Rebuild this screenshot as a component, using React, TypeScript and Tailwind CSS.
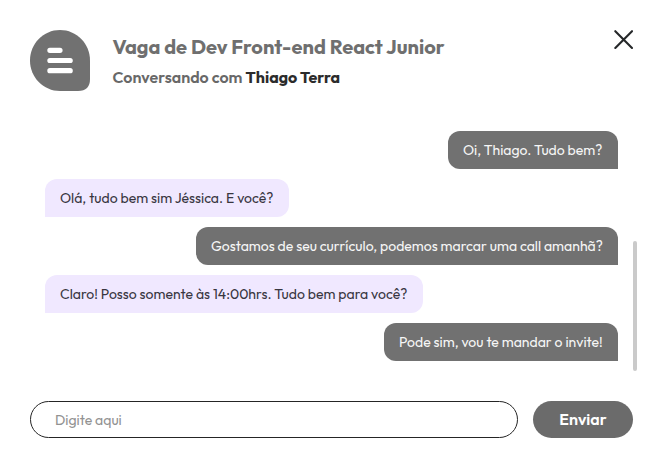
type Message = { text: string; mine: boolean; width: string };

const messages: Message[] = [
  { text: "Oi, Thiago. Tudo bem?", mine: true, width: "w-[170px]" },
  { text: "Olá, tudo bem sim Jéssica. E você?", mine: false, width: "w-[244px]" },
  { text: "Gostamos de seu currículo, podemos marcar uma call amanhã?", mine: true, width: "w-[422px]" },
  { text: "Claro! Posso somente às 14:00hrs. Tudo bem para você?", mine: false, width: "w-[378px]" },
  { text: "Pode sim, vou te mandar o invite!", mine: true, width: "w-[234px]" },
];

function Bubble({ text, mine, width }: Message) {
  const side = mine
    ? "self-end rounded-br-none bg-[#717171] text-[#f6f6f6]"
    : "self-start rounded-bl-none bg-[#f0e8ff] text-[#38363f]";
  return (
    <div className={`flex h-[38px] items-center whitespace-nowrap rounded-xl pl-[15px] text-[14px] ${side} ${width}`}>
      {text}
    </div>
  );
}

export default function App() {
  return (
    <main className="flex h-[468px] w-[663px] flex-col overflow-hidden bg-white px-[30px] pt-[30px] font-['Outfit','Lato',sans-serif]">
      <header className="flex h-[61px] items-start">
        <svg width="60" height="61" viewBox="0 0 60 61" className="shrink-0">
          <path d="M30 0C46.6 0 60 13.6 60 30.5V49Q60 61 48 61H30C13.4 61 0 47.4 0 30.5S13.4 0 30 0Z" fill="#717171" />
          <g stroke="#fff" strokeWidth="5.2" strokeLinecap="round">
            <path d="M19.9 20.3H30M19.9 30.5H40.2M19.9 40.7H40.2" />
          </g>
        </svg>
        <div className="ml-[22.5px] flex flex-col whitespace-nowrap">
          <h1 className="mt-[4px] h-[26px] self-start text-[20px] font-bold leading-[26px] text-[#6f6f6f]">Vaga de Dev Front-end React Junior</h1>
          <p className="mt-[7px] text-[16px] font-semibold leading-[20px] text-[#686868]">
            Conversando com <strong className="font-bold text-[#2b2b2b]">Thiago Terra</strong>
          </p>
        </div>
        <button aria-label="Fechar" className="ml-auto">
          <svg width="20" height="20" viewBox="0 0 20 20" stroke="#252729" strokeWidth="2.1" strokeLinecap="round">
            <path d="M2.3 1.2 19 17.9M19 1.2 2.3 17.9" />
          </svg>
        </button>
      </header>

      <section className="mt-[40px] -mr-[4px] flex h-[240px] justify-between pl-[15px]">
        <div className="flex w-[573px] flex-col gap-[10px]">
          {messages.map((m) => (
            <Bubble key={m.text} {...m} />
          ))}
        </div>
        <div className="h-[130px] w-[4px] self-end rounded-full bg-[#cacaca]" />
      </section>

      <form className="mt-[30px] flex h-[37px] gap-[15px]">
        <input
          placeholder="Digite aqui"
          className="w-[488px] rounded-full border border-[#252525] pt-px pl-[24px] text-[14px] placeholder:text-[#929292]"
        />
        <button type="button" className="w-[100px] rounded-full bg-[#6b6b6b] pb-px text-[16px] font-semibold text-white">
          Enviar
        </button>
      </form>
    </main>
  );
}
